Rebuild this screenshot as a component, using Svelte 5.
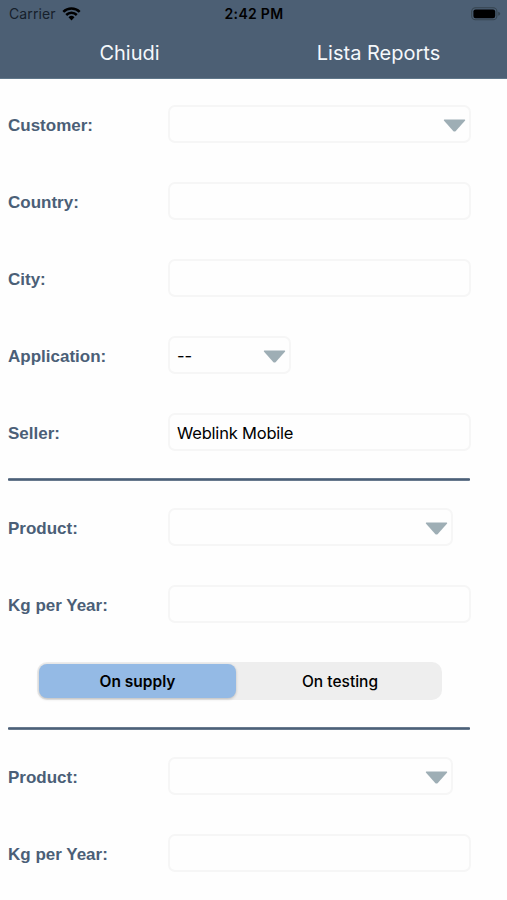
<script lang="ts">
  interface Field {
    label: string;
    value?: string;
    select?: boolean;
    size?: 'small' | 'medium' | 'full';
  }

  const customerFields: Field[] = [
    { label: 'Customer:', select: true },
    { label: 'Country:' },
    { label: 'City:' },
    { label: 'Application:', value: '--', select: true, size: 'small' },
    { label: 'Seller:', value: 'Weblink Mobile' },
  ];

  const productFields: Field[] = [
    { label: 'Product:', select: true, size: 'medium' },
    { label: 'Kg per Year:' },
  ];

  const modes = ['On supply', 'On testing'];
  let mode = $state('On supply');
</script>

{#snippet row(field: Field)}
  <div class="row">
    <span class="label">{field.label}</span>
    <div class="field {field.size ?? 'full'}">
      <span class="value">{field.value ?? ''}</span>
      {#if field.select}
        <svg class="arrow" width="23" height="13" viewBox="0 0 23 13">
          <path d="M1.4.6h20.2q1 .3.3 1.2L12.8 12q-1.3 1.1-2.6 0L1.1 1.8Q.4.9 1.4.6z" />
        </svg>
      {/if}
    </div>
  </div>
{/snippet}

<div class="screen">
  <header>
    <div class="status">
      <div class="carrier">
        <span class="name">Carrier</span>
        <svg width="19" height="14" viewBox="0 0 19 14">
          <path class="wave" d="M1.3 4.8a11.7 11.7 0 0 1 16.4 0" />
          <path class="wave" d="M4.2 8a7.6 7.6 0 0 1 10.6 0" />
          <path d="M9.5 13.5 6.5 10.3a4.3 4.3 0 0 1 6 0z" />
        </svg>
      </div>
      <span class="time">2:42 PM</span>
      <div class="power">
        <svg width="30" height="14" viewBox="0 0 30 14">
          <rect class="shell" x=".7" y=".7" width="25.2" height="12" rx="3.8" />
          <rect x="2.4" y="2.4" width="21.8" height="8.8" rx="2.2" />
          <path class="tip" d="M27.2 4.7q2 .6 2 2t-2 2z" />
        </svg>
      </div>
    </div>
    <nav>
      <button class="close">Chiudi</button>
      <button class="list">Lista Reports</button>
    </nav>
  </header>

  <main>
    <section>
      {#each customerFields as field}
        {@render row(field)}
      {/each}
    </section>
    <hr />
    <section>
      {#each productFields as field}
        {@render row(field)}
      {/each}
      <div class="segmented">
        {#each modes as name}
          <button class:active={mode === name} onclick={() => (mode = name)}>
            <span>{name}</span>
          </button>
        {/each}
      </div>
    </section>
    <hr />
    <section>
      {#each productFields as field}
        {@render row(field)}
      {/each}
    </section>
  </main>
</div>

<style>
  :global(body) {
    margin: 0;
    background: #fefefe;
  }
  .screen {
    width: 507px;
    height: 900px;
    overflow: hidden;
    font-family: Inter, 'Liberation Sans', sans-serif;
    color: #000;
    background: #fefefe;
  }
  button {
    padding: 0;
    border: 0;
    background: none;
    font: inherit;
    color: inherit;
    cursor: pointer;
  }
  header {
    box-sizing: border-box;
    height: 79px;
    background: #4c5f74;
    border-bottom: 1px solid #5f7689;
  }
  .status {
    display: grid;
    grid-template-columns: 1fr auto 1fr;
    align-items: center;
    height: 27px;
    padding: 0 6px 0 9px;
    font-size: 14px;
  }
  .carrier {
    display: flex;
    align-items: center;
    gap: 6px;
    letter-spacing: 0.1px;
    color: #16202b;
  }
  .carrier svg {
    fill: #000;
  }
  .wave {
    fill: none;
    stroke: #000;
    stroke-width: 2.5;
  }
  .time {
    margin-left: -2px;
    font-weight: 600;
    letter-spacing: 0.3px;
  }
  .power {
    display: flex;
    justify-content: flex-end;
  }
  .shell {
    fill: none;
    stroke: #36444f;
    stroke-width: 1.1;
  }
  .tip {
    fill: #36444f;
  }
  nav {
    display: grid;
    grid-template-columns: 1fr 1fr;
    height: 51px;
    padding: 0 4px 0 5px;
    font-size: 20px;
    letter-spacing: -0.25px;
    color: #f5f8fb;
  }
  main {
    padding: 26px 36px 0 8px;
  }
  section {
    display: flex;
    flex-direction: column;
    gap: 39px;
  }
  hr {
    height: 3px;
    margin: 27px 1px 27px 0;
    border: 0;
    background: linear-gradient(#8493a4, #4c6078 1px, #4c6078 2px, #8493a4);
    border-radius: 1px;
  }
  .row {
    display: flex;
    align-items: center;
    height: 38px;
  }
  .label {
    width: 160px;
    padding-top: 3px;
    font-family: 'Liberation Sans', Arial, sans-serif;
    font-size: 17px;
    font-weight: 700;
    color: #4b5f77;
  }
  .field {
    box-sizing: border-box;
    display: flex;
    align-items: center;
    justify-content: space-between;
    height: 38px;
    padding: 1px 3px 0 7px;
    border: 2px solid #f6f6f6;
    border-radius: 7px;
    background: #fefefe;
    font-size: 16.5px;
    letter-spacing: -0.2px;
  }
  .full {
    width: 303px;
  }
  .medium {
    width: 285px;
  }
  .small {
    width: 123px;
  }
  .arrow {
    flex: none;
    margin-top: 2px;
    fill: #9eaeb5;
  }
  .segmented {
    box-sizing: border-box;
    display: flex;
    gap: 4px;
    height: 38px;
    margin: 0 29px;
    padding: 2px;
    border-radius: 10px;
    background: #eee;
    font-size: 15.5px;
    font-weight: 500;
  }
  .segmented button {
    flex: 200;
    border-radius: 8px;
  }
  .segmented .active {
    flex: 197;
    background: #94bae5;
    font-weight: 600;
    box-shadow: 0 1px 3px rgba(0, 0, 0, 0.22);
  }
</style>
